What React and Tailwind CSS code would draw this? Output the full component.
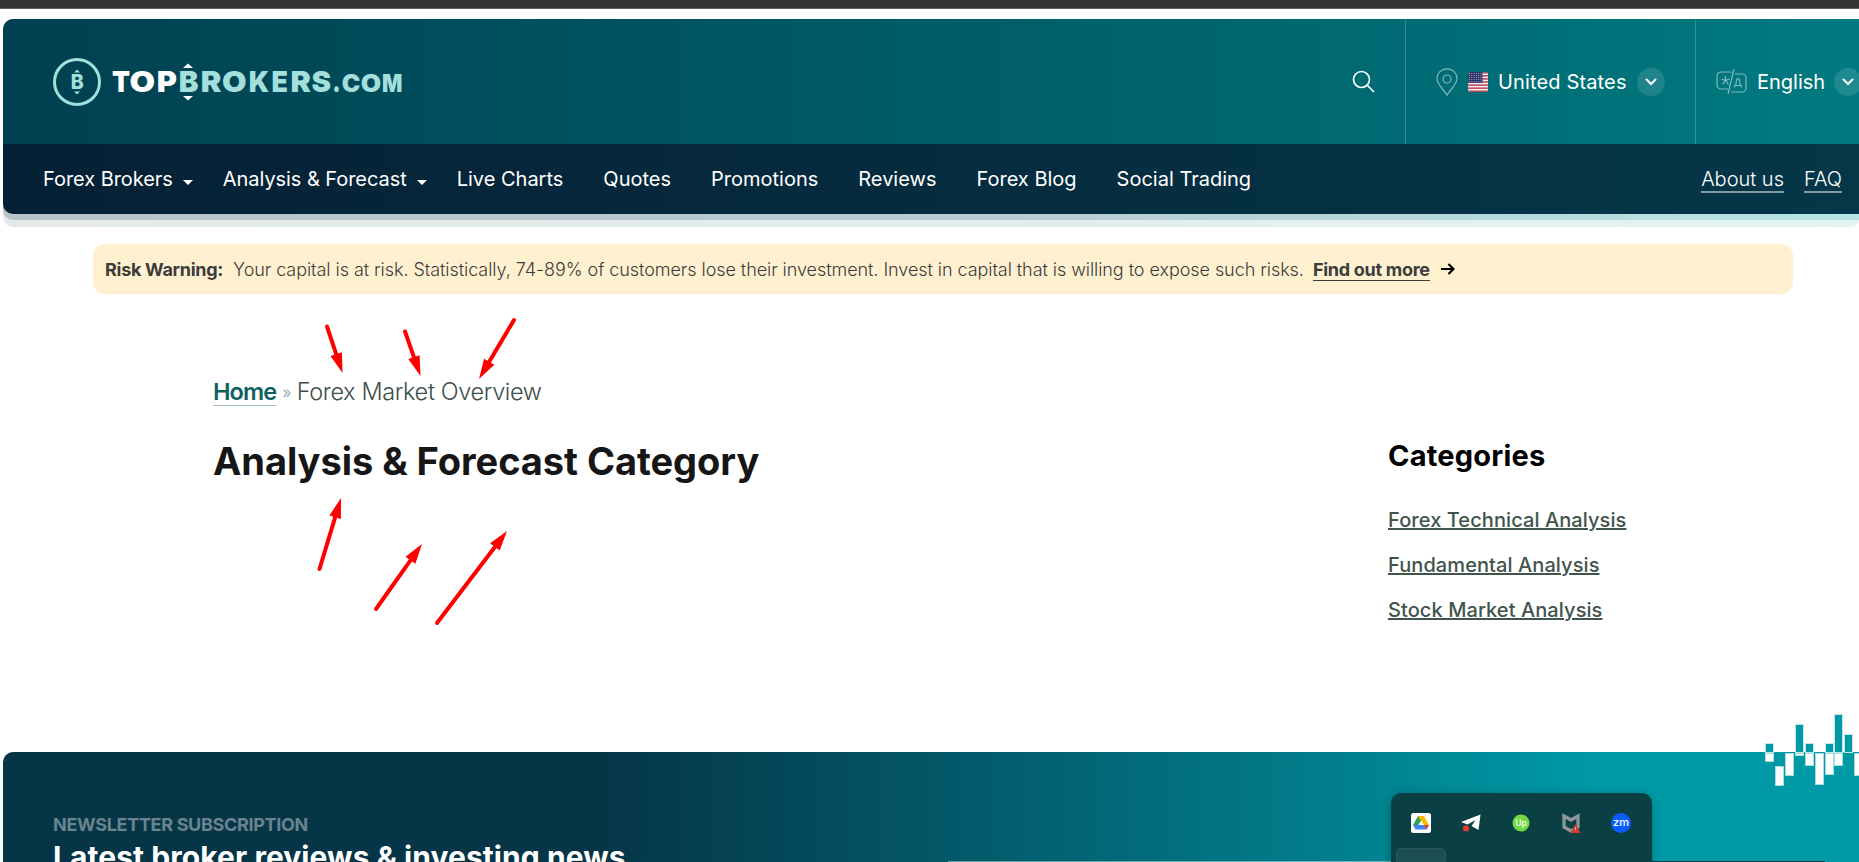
const bars = [
  // x, top, bottom relative to the section edge (negative = above)
  [0, -9, 10], [10, 14, 34], [20, 1, 24], [30, -28, 4], [40, -9, 14], [50, 1, 33],
  [60, -9, 23], [69, -38, 14], [79, -18, 1], [89, 1, 24],
];

// letter, left, advance, font size, colour
const wordmark = [
  ["T", 60, 18, 29, "#fff"], ["O", 77.6, 25.6, 29, "#fff"], ["P", 104.7, 20.2, 29, "#fff"],
  ["B", 126.7, 19.7, 29, "#a3dfdb"], ["R", 148.7, 20.6, 29, "#a3dfdb"], ["O", 169.9, 24.6, 29, "#a3dfdb"],
  ["K", 196.7, 20.4, 29, "#a3dfdb"], ["E", 219.4, 16.4, 29, "#a3dfdb"], ["R", 238.4, 20.4, 29, "#a3dfdb"],
  ["S", 259.4, 19.6, 29, "#a3dfdb"], [".", 280.3, 8.4, 29, "#a3dfdb"], ["C", 289.8, 18.6, 24, "#a3dfdb"],
  ["O", 308.8, 20.4, 24, "#a3dfdb"], ["M", 330, 20.4, 24, "#a3dfdb"],
];

function NavItem({ children, caret, className = "" }) {
  return (
    <a className={"flex items-center text-[20px] text-white " + className}>
      {children}
      {caret && (
        <svg className="ml-[10px] mt-[6px]" width="10" height="5" viewBox="0 0 10 5"><path d="M0 0h10L5 5z" fill="#fff" /></svg>
      )}
    </a>
  );
}

function Chevron() {
  return (
    <span className="flex h-[28px] w-[28px] shrink-0 items-center justify-center rounded-full bg-white/12">
      <svg width="12" height="8" viewBox="0 0 12 8" fill="none" stroke="#fff" strokeWidth="2" strokeLinecap="round"><path d="M1.500 1.500L6 6l4.500-4.500" /></svg>
    </span>
  );
}

function Flag() {
  return (
    <svg width="20" height="20" viewBox="0 0 20 20">
      <clipPath id="fl"><rect width="20" height="20" rx="3" /></clipPath>
      <g clipPath="url(#fl)">
        <rect width="20" height="20" fill="#f4f0f0" />
        {[0, 1, 2, 3, 4, 5, 6].map((i) => <rect key={i} y={i * 3.08} width="20" height="1.54" fill="#b8475a" />)}
        <rect width="14.500" height="10.800" fill="#2f3668" />
        {[0, 1, 2, 3, 4].map((r) => [0, 1, 2, 3, 4, 5].map((c) => <circle key={r + "-" + c} cx={1.5 + c * 2.3} cy={1.5 + r * 2} r=".5" fill="#b5b8d8" />))}
      </g>
    </svg>
  );
}

function Logo() {
  return (
    <svg width="352" height="50" viewBox="0 0 352 50" className="shrink-0">
      <circle cx="25" cy="25" r="22.500" fill="none" stroke="#a3dfdb" strokeWidth="3" />
      <text x="18.800" y="32" fontWeight="800" fontSize="20" textLength="13" lengthAdjust="spacingAndGlyphs" fill="#a3dfdb">B</text>
      <path d="M22 15.500h6L25 12.500zM22 34.500h6l-3 3z" fill="#a3dfdb" />
      {wordmark.map(([ch, x, w, size, color]) => (
        <text key={x} x={x} y="35" fontWeight="900" fontSize={size} textLength={w} lengthAdjust="spacingAndGlyphs" fill={color}>{ch}</text>
      ))}
      <path d="M131 11h10l-5-4.500zM131 39h10l-5 4.500z" fill="#fff" />
    </svg>
  );
}

function Arrow({ a, b }) {
  const dx = b[0] - a[0], dy = b[1] - a[1], l = Math.hypot(dx, dy), ux = dx / l, uy = dy / l;
  const cx = b[0] - ux * 20, cy = b[1] - uy * 20;
  return (
    <g>
      <line x1={a[0]} y1={a[1]} x2={cx} y2={cy} stroke="#f00" strokeWidth="4" strokeLinecap="round" />
      <polygon points={`${b[0]},${b[1]} ${cx - uy * 6},${cy + ux * 6} ${cx + uy * 6},${cy - ux * 6}`} fill="#f00" />
    </g>
  );
}

export default function App() {
  return (
    <div className="relative flex h-[862px] w-[1859px] flex-col overflow-hidden bg-white font-['Inter',sans-serif]">
      <div className="h-[9px] shrink-0 border-b border-[#5c5c5c] bg-[#343434]" />
      <header className="ml-[3px] mt-[10px] h-[208px] shrink-0 rounded-l-[10px] rounded-br-[8px] bg-linear-to-r from-[#e4eaec] via-[#e4eced] to-[#e2f3f4]">
        <div className="h-[201px] rounded-l-[10px] bg-linear-to-r from-[#b6c4ca] via-[#b6cacf] to-[#b7e4e7]">
          <div className="h-[195px] overflow-hidden rounded-l-[10px]">
            <div className="flex h-[125px] bg-linear-to-r from-[#004050] to-[#007a80]">
              <div className="flex flex-1 items-center justify-between pl-[49px] pr-[30px]">
                <Logo />
                <svg width="23" height="23" viewBox="0 0 23 23" fill="none" stroke="#fff" strokeWidth="1.700" strokeLinecap="round"><circle cx="9.500" cy="9.500" r="8" /><path d="M15.500 15.500l6 6" /></svg>
              </div>
              <div className="flex w-[290px] shrink-0 items-center border-l border-white/20 pl-[30px]">
                <svg width="22" height="28" viewBox="0 0 22 28" fill="none" stroke="#fff" strokeOpacity=".5" strokeWidth="1.200"><path d="M11 27C7 21 1 16 1 10.500a10 9.700 0 0 1 20 0C21 16 15 21 11 27z" /><circle cx="11" cy="11" r="4" /></svg>
                <span className="ml-[10px]"><Flag /></span>
                <span className="ml-[10px] mr-[10px] w-[129px] whitespace-nowrap text-[20px] tracking-[0.150px] text-white">United States</span>
                <Chevron />
              </div>
              <div className="flex w-[164px] shrink-0 items-center overflow-hidden border-l border-white/20 pl-[20px]">
                <svg className="shrink-0" width="31" height="27" viewBox="0 0 31 27" fill="none" stroke="#fff" strokeOpacity=".5" strokeWidth="1.200"><path d="M15.500 4H5a4 4 0 0 0-4 4v9a4 4 0 0 0 4 4h7M18 1L12 26M19 6h7a4 4 0 0 1 4 4v10a4 4 0 0 1-4 4H15M9.500 8v4.500M5.500 11l4 1.500 4-1.500M9.500 12.500L6.500 16.500M9.500 12.500l3 4M18.500 19.500v-2h7v2M19.700 17.500l1-6.500h2.600l1 6.500" /></svg>
                <span className="ml-[10px] w-[67px] shrink-0 text-[20px] text-white">English</span>
                <span className="ml-[10px]"><Chevron /></span>
              </div>
            </div>
            <nav className="flex h-[70px] items-center bg-linear-to-r from-[#052035] to-[#053748] pl-[40px] pr-[17px]">
              <NavItem caret className="tracking-[-0.050px]">Forex Brokers</NavItem>
              <NavItem caret className="ml-[30px] tracking-[-0.060px]">Analysis &amp; Forecast</NavItem>
              <NavItem className="ml-[30px]">Live Charts</NavItem>
              <NavItem className="ml-[40px]">Quotes</NavItem>
              <NavItem className="ml-[40px]">Promotions</NavItem>
              <NavItem className="ml-[40px]">Reviews</NavItem>
              <NavItem className="ml-[40px]">Forex Blog</NavItem>
              <NavItem className="ml-[40px]">Social Trading</NavItem>
              <div className="ml-auto flex gap-[20px] text-[20px] font-light leading-[24px] text-white">
                <a className="mt-[2px] border-b-2 border-white/50">About us</a>
                <a className="mt-[2px] border-b-2 border-white/50">FAQ</a>
              </div>
            </nav>
          </div>
        </div>
      </header>

      <div className="ml-[93px] mt-[17px] flex h-[50px] w-[1700px] shrink-0 items-center rounded-[12px] bg-[#fff1cf] pl-[12px] text-[18px] text-[#3c3c3c]">
        <b className="font-bold tracking-[-0.280px]">Risk Warning:</b>
        <span className="ml-[10px] font-light tracking-[-0.060px]">Your capital is at risk. Statistically, 74-89% of customers lose their investment. Invest in capital that is willing to expose such risks.</span>
        <b className="ml-[9px] mt-[2px] border-b border-[#3c3c3c] font-bold leading-[20px] tracking-[-0.270px]">Find out more</b>
        <svg className="ml-[11px]" width="14" height="12" viewBox="0 0 14 12" fill="none" stroke="#000" strokeWidth="2.200"><path d="M0 6h12M7.500 1l5 5-5 5" /></svg>
      </div>

      <main className="flex h-[458px] shrink-0 pl-[213px]">
        <div className="w-[1175px] pt-[84px]">
          <div className="flex h-[28px] items-center text-[23.5px] text-[#3e4f48]">
            <a className="h-[28px] border-b border-[#9fbcc4] font-semibold leading-[27px] tracking-[-0.900px] text-[#0f6060]">Home</a>
            <span className="ml-[6px] mr-[5px] text-[16px] text-[#9aaeb6]">»</span>
            <span className="font-light tracking-[-0.370px]">Forex Market Overview</span>
          </div>
          <h1 className="mt-[31px] text-[38px] font-bold leading-[48px] tracking-[-0.040px] text-[#161616]">Analysis &amp; Forecast Category</h1>
        </div>
        <aside className="pt-[142px]">
          <h2 className="text-[29px] font-bold leading-[40px] tracking-[0.200px] text-black">Categories</h2>
          <ul className="mt-[22px] text-[20px] font-medium leading-[45px] tracking-[0.080px] text-[#41544b] underline">
            <li>Forex Technical Analysis</li>
            <li>Fundamental Analysis</li>
            <li>Stock Market Analysis</li>
          </ul>
        </aside>
      </main>

      <section className="ml-[3px] flex-1 rounded-tl-[10px] bg-[linear-gradient(to_right,#053547_0%,#053547_32%,#0099a6_86%)] pl-[50px] pt-[62px]">
        <div className="text-[18px] font-bold leading-[22px] tracking-[-0.320px] text-[#6a848f]">NEWSLETTER SUBSCRIPTION</div>
        <div className="mt-[3px] text-[30px] font-bold leading-[36px] tracking-[0.060px] text-white">Latest broker reviews &amp; investing news</div>
      </section>

      <svg className="absolute left-[1765px] top-[712px]" width="94" height="80" viewBox="0 -40 94 80">
        {bars.map(([x, t, b]) => (
          <g key={x}>
            {t < 0 && <rect x={x + 0.5} y={t + 0.5} width="8" height={-t} fill="#0099a6" stroke="#c5e6e9" />}
            {b > 1 && <rect x={x + 0.5} y={Math.max(t, 1) + 0.5} width="8" height={b - Math.max(t, 1) - 1} fill="#fff" stroke="#a8dde0" />}
          </g>
        ))}
      </svg>

      <svg className="pointer-events-none absolute left-0 top-0" width="1859" height="862">
        <Arrow a={[327, 326.5]} b={[342.5, 373]} />
        <Arrow a={[405, 331.5]} b={[420.5, 376]} />
        <Arrow a={[514, 320]} b={[479, 379]} />
        <Arrow a={[319.5, 569]} b={[341, 498]} />
        <Arrow a={[376, 609]} b={[422, 544]} />
        <Arrow a={[437, 623]} b={[507, 531]} />
      </svg>

      <div className="absolute left-[948px] top-[861px] h-[1px] w-[443px] bg-white/40" />
      <div className="absolute left-[1652px] top-[861px] h-[1px] w-[173px] bg-[#0a3f44]" />
      <div className="absolute left-[1391px] top-[793px] h-[80px] w-[261px] rounded-[10px] bg-[#0a3f44] shadow-[0_2px_10px_rgba(0,40,50,0.35)]">
        <div className="flex gap-[30px] pl-[20px] pt-[20px]">
          <svg width="20" height="20" viewBox="0 0 20 20"><rect width="20" height="20" rx="2.500" fill="#fff" /><path d="M7 3h3v5L5.500 15.500 2 12z" fill="#2fa553" /><path d="M7 3h6l5 9h-5z" fill="#fcbd00" /><path d="M4.500 12H18l-2.500 4.500H4.500L2 12z" fill="#4285f4" /><path d="M13 12h5l-2.500 4.500z" fill="#ea4335" /><path d="M10 8l2.500 4h-5z" fill="#fff" /></svg>
          <svg width="20" height="20" viewBox="0 0 20 20"><path d="M0 9L19.500 1.500 17.500 17l-7-4 4-6-8 4.500z" fill="#fff" /><circle cx="5" cy="15.500" r="3" fill="#f03a30" /></svg>
          <svg width="20" height="20" viewBox="0 0 20 20"><circle cx="10" cy="10" r="8.500" fill="#6fda44" /><text x="10" y="12.800" textAnchor="middle" fontSize="8.500" fontWeight="500" fill="#fff">Up</text></svg>
          <svg width="20" height="20" viewBox="0 0 20 20"><path d="M3 3l7 4 7-4v11l-7 4-7-4z" fill="none" stroke="#8d9799" strokeWidth="3.300" /><path d="M14.500 11l5 9h-10z" fill="#d73a35" /><path d="M14.500 14v3" stroke="#fff" strokeOpacity=".6" /></svg>
          <svg width="20" height="20" viewBox="0 0 20 20"><circle cx="10" cy="10" r="10" fill="#0b5cff" /><text x="10" y="13.200" textAnchor="middle" fontSize="11" fontWeight="500" fill="#fff">zm</text></svg>
        </div>
        <div className="ml-[5px] mt-[15px] h-[30px] w-[50px] rounded-[5px] border border-white/5 bg-white/8" />
      </div>
    </div>
  );
}
